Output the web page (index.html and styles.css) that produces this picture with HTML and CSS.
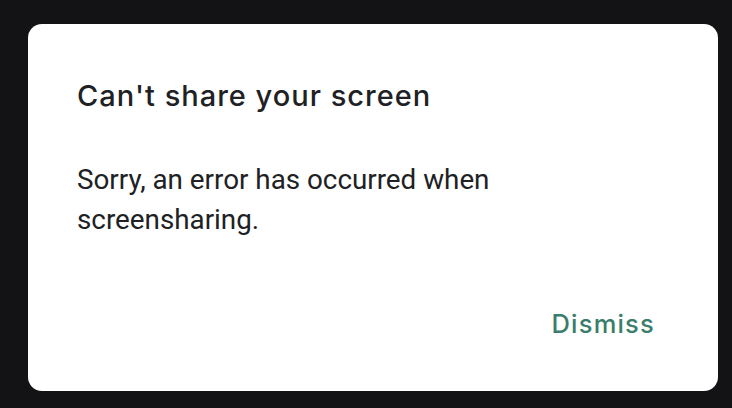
FILE: index.html
```html
<!DOCTYPE html>
<html>
<head>
<meta charset="utf-8">
<link rel="stylesheet" href="styles.css">
</head>
<body>
<div class="backdrop">
  <div class="dialog" role="dialog">
    <h1 class="title">Can't share your screen</h1>
    <p class="body">Sorry, an error has occurred when screensharing.</p>
    <div class="actions">
      <button class="btn">Dismiss</button>
    </div>
  </div>
</div>
</body>
</html>
```
FILE: styles.css
```css
html, body {
  margin: 0;
  padding: 0;
  background: #131315;
}
.backdrop {
  width: 732px;
  height: 408px;
  padding: 24px 14px 17px 28px;
  box-sizing: border-box;
}
.dialog {
  background: #ffffff;
  border-radius: 14px;
  height: 367px;
  box-sizing: border-box;
  padding: 54px 49px 0 49px;
  display: flex;
  flex-direction: column;
}
.title {
  margin: 0;
  font-family: Inter, Roboto, sans-serif;
  font-weight: 500;
  font-size: 29px;
  line-height: 36px;
  letter-spacing: 1px;
  color: #202124;
}
.body {
  margin: 46px 0 0 0;
  font-family: Roboto, "Liberation Sans", sans-serif;
  font-size: 27.8px;
  line-height: 40px;
  color: #202124;
  width: 480px;
}
.actions {
  display: flex;
  justify-content: flex-end;
  margin-top: 66px;
}
.btn {
  border: none;
  background: none;
  padding: 0;
  margin-right: 14px;
  font-family: Inter, Roboto, sans-serif;
  font-weight: 500;
  font-size: 25.5px;
  line-height: 36px;
  letter-spacing: 1.2px;
  color: #3b7d6b;
  cursor: pointer;
}
```
